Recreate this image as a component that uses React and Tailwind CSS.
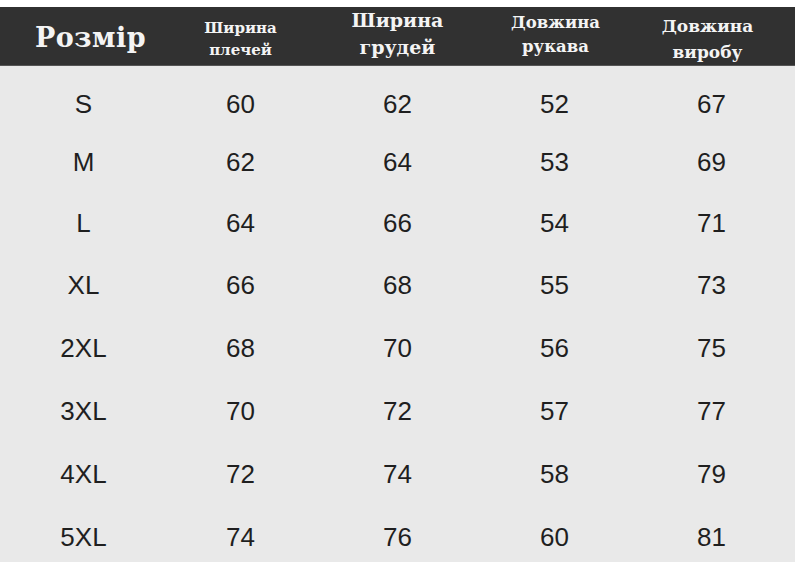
export default function App() {
  const rows = [
    ["S", 60, 62, 52, 67],
    ["M", 62, 64, 53, 69],
    ["L", 64, 66, 54, 71],
    ["XL", 66, 68, 55, 73],
    ["2XL", 68, 70, 56, 75],
    ["3XL", 70, 72, 57, 77],
    ["4XL", 72, 74, 58, 79],
    ["5XL", 74, 76, 60, 81],
  ];
  const heights = ["h-[58px]", "h-[59px]", "h-[62px]", "h-[63px]", "h-[63px]", "h-[63px]", "h-[63px]", "h-[63px]"];
  const serif = { fontFamily: '"DejaVu Serif", "Liberation Serif", serif' };
  return (
    <div className="w-[795px] h-[562px] overflow-hidden bg-[#e9e9e9] flex flex-col">
      <div className="h-[7px] bg-white shrink-0" />
      <div
        className="h-[59px] shrink-0 bg-[#313131] text-[#f4f4f4] font-bold grid grid-cols-5 px-[5px] items-center border-b border-[#555]"
        style={serif}
      >
        <div className="flex justify-center pl-[14px] text-[27px] leading-none tracking-[0.5px]">Розмір</div>
        <div className="flex flex-col items-center text-[15px] leading-[22px] pt-[2px]">
          <span>Ширина</span>
          <span>плечей</span>
        </div>
        <div className="flex flex-col items-center text-[19px] leading-[27px] pb-[7px]">
          <span>Ширина</span>
          <span>грудей</span>
        </div>
        <div className="flex flex-col items-center text-[16.5px] leading-[24px] pb-[5px] pl-[2px]">
          <span>Довжина</span>
          <span>рукава</span>
        </div>
        <div className="flex flex-col items-center text-[17px] leading-[26px] pt-[2px] pr-[8px]">
          <span>Довжина</span>
          <span>виробу</span>
        </div>
      </div>
      <div
        className="flex flex-col pt-[9px] px-[5px] text-[#1f1f1f] text-[26px]"
        style={{ fontFamily: '"Liberation Sans", Arial, sans-serif' }}
      >
        {rows.map((r, ri) => (
          <div key={r[0]} className={"grid grid-cols-5 items-center " + heights[ri]}>
            {r.map((c, i) => (
              <div key={i} className="text-center">
                {c}
              </div>
            ))}
          </div>
        ))}
      </div>
    </div>
  );
}
